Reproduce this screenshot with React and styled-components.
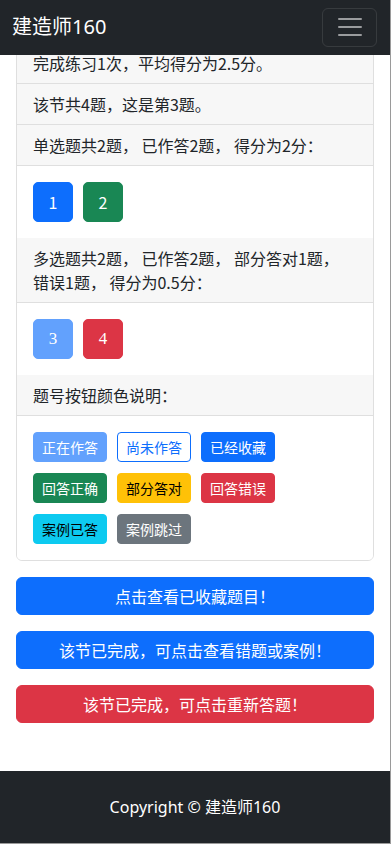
import React from "react";
import styled, { createGlobalStyle } from "styled-components";

const GlobalStyle = createGlobalStyle`
  html, body {
    margin: 0;
    padding: 0;
    background: #fff;
  }
  body {
    font-family: "Noto Sans", "Noto Sans CJK SC", sans-serif;
    font-size: 16px;
    line-height: 24px;
    color: #212529;
  }
  * { box-sizing: border-box; }
`;

const sections = [
  {
    title: "单选题共2题， 已作答2题， 得分为2分：",
    items: [
      { n: 1, kind: "primary" },
      { n: 2, kind: "success" },
    ],
  },
  {
    title: "多选题共2题， 已作答2题， 部分答对1题， 错误1题， 得分为0.5分：",
    items: [
      { n: 3, kind: "current", serif: true },
      { n: 4, kind: "danger", serif: true },
    ],
  },
];

const legend = [
  { label: "正在作答", kind: "current" },
  { label: "尚未作答", kind: "outline" },
  { label: "已经收藏", kind: "primary" },
  { label: "回答正确", kind: "success" },
  { label: "部分答对", kind: "warning" },
  { label: "回答错误", kind: "danger" },
  { label: "案例已答", kind: "info" },
  { label: "案例跳过", kind: "secondary" },
];

const palette = {
  primary: { bg: "#0d6efd", fg: "#fff", border: "#0d6efd" },
  current: { bg: "#62a1fd", fg: "#fff", border: "#62a1fd" },
  success: { bg: "#198754", fg: "#fff", border: "#198754" },
  danger: { bg: "#dc3545", fg: "#fff", border: "#dc3545" },
  warning: { bg: "#ffc107", fg: "#000", border: "#ffc107" },
  info: { bg: "#0dcaf0", fg: "#000", border: "#0dcaf0" },
  secondary: { bg: "#6c757d", fg: "#fff", border: "#6c757d" },
  outline: { bg: "#fff", fg: "#0d6efd", border: "#0d6efd" },
};

export default function App() {
  return (
    <>
      <GlobalStyle />
      <Frame>
        <Navbar>
          <Brand>建造师160</Brand>
          <Toggler aria-label="menu">
            <svg width="30" height="30" viewBox="0 0 30 30">
              <path
                d="M4 7h22M4 15h22M4 23h22"
                stroke="rgba(255,255,255,0.55)"
                strokeWidth="2"
                strokeLinecap="round"
              />
            </svg>
          </Toggler>
        </Navbar>

        <Main>
          <Card>
            <Item>完成练习1次，平均得分为2.5分。</Item>
            <Item>该节共4题，这是第3题。</Item>
            {sections.map((s, i) => (
              <React.Fragment key={i}>
                <Header>{s.title}</Header>
                <Body>
                  <NumRow>
                    {s.items.map((q) => (
                      <NumButton key={q.n} $kind={q.kind} $serif={q.serif}>
                        {q.n}
                      </NumButton>
                    ))}
                  </NumRow>
                </Body>
              </React.Fragment>
            ))}
            <Header>题号按钮颜色说明：</Header>
            <Body>
              <LegendGrid>
                {legend.map((l) => (
                  <Tag key={l.label} $kind={l.kind}>
                    {l.label}
                  </Tag>
                ))}
              </LegendGrid>
            </Body>
          </Card>

          <Actions>
            <BlockButton $kind="primary">点击查看已收藏题目！</BlockButton>
            <BlockButton $kind="primary">该节已完成，可点击查看错题或案例！</BlockButton>
            <BlockButton $kind="danger">该节已完成，可点击重新答题！</BlockButton>
          </Actions>
        </Main>

        <Footer>Copyright © 建造师160</Footer>
      </Frame>
    </>
  );
}

const Frame = styled.div`
  width: 391px;
  border-right: 1px solid #9a9a9a;
  border-bottom: 1px solid #9a9a9a;
`;

const Navbar = styled.nav`
  position: fixed;
  top: 0;
  left: 0;
  width: 390px;
  height: 55px;
  background: #212529;
  display: flex;
  align-items: center;
  justify-content: space-between;
  padding: 0 13px 1px 12px;
  z-index: 10;
`;

const Brand = styled.a`
  color: #fff;
  font-family: "Noto Sans", "Noto Sans CJK SC", sans-serif;
  font-size: 20px;
  line-height: 30px;
  margin-top: -1px;
`;

const Toggler = styled.button`
  width: 55px;
  height: 39px;
  padding: 0;
  background: transparent;
  border: 1px solid rgba(255, 255, 255, 0.1);
  border-radius: 6px;
  display: flex;
  align-items: center;
  justify-content: center;
`;

const Main = styled.main`
  padding: 42px 16px 48px;
`;

const Card = styled.div`
  border: 1px solid #dfdfdf;
  border-radius: 6px;
  overflow: hidden;
  background: #fff;
`;

const Item = styled.div`
  padding: 8px 16px;
  background: #f7f7f7;
  border-bottom: 1px solid #dfdfdf;
  font-family: "Noto Sans CJK SC", sans-serif;
`;

const Header = styled.div`
  padding: 8px 16px;
  background: #f7f7f7;
  border-bottom: 1px solid #dfdfdf;
  font-family: "Noto Sans CJK SC", sans-serif;
`;

const Body = styled.div`
  padding: 16px;
  background: #fff;
`;

const NumRow = styled.div`
  display: flex;
  gap: 10px;
`;

const NumButton = styled.button`
  width: 40px;
  height: 40px;
  padding: 0;
  border-radius: 5px;
  border: 1px solid ${(p) => palette[p.$kind].border};
  background: ${(p) => palette[p.$kind].bg};
  color: ${(p) => palette[p.$kind].fg};
  font-family: ${(p) =>
    p.$serif ? '"Liberation Serif", serif' : '"Noto Sans CJK SC", sans-serif'};
  font-size: ${(p) => (p.$serif ? "17px" : "16px")};
  line-height: 24px;
`;

const LegendGrid = styled.div`
  display: flex;
  flex-wrap: wrap;
  column-gap: 10px;
  row-gap: 11px;
`;

const Tag = styled.span`
  width: 74px;
  height: 30px;
  display: flex;
  align-items: center;
  justify-content: center;
  border-radius: 4px;
  border: 1px solid ${(p) => palette[p.$kind].border};
  background: ${(p) => palette[p.$kind].bg};
  color: ${(p) => palette[p.$kind].fg};
  font-family: "Noto Sans CJK SC", sans-serif;
  font-size: 14px;
  line-height: 20px;
`;

const Actions = styled.div`
  display: flex;
  flex-direction: column;
  gap: 16px;
  margin-top: 16px;
`;

const BlockButton = styled.button`
  width: 100%;
  height: 38px;
  border-radius: 6px;
  border: 1px solid ${(p) => palette[p.$kind].border};
  background: ${(p) => palette[p.$kind].bg};
  color: ${(p) => palette[p.$kind].fg};
  font-family: "Noto Sans CJK SC", sans-serif;
  font-size: 16px;
  line-height: 24px;
  padding: 6px 12px;
`;

const Footer = styled.footer`
  height: 72px;
  background: #212529;
  color: #fff;
  display: flex;
  align-items: center;
  justify-content: center;
  font-family: "Noto Sans", "Noto Sans CJK SC", sans-serif;
  font-size: 16px;
  padding-bottom: 1px;
`;
